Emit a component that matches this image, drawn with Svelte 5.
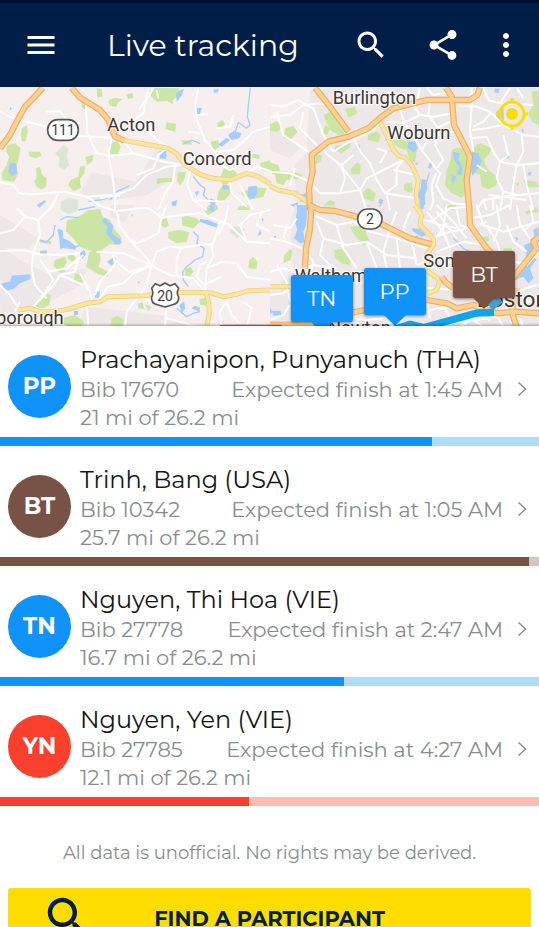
<script>
  const participants = [
    { initials: 'PP', name: 'Prachayanipon, Punyanuch (THA)', bib: 17670, finish: '1:45 AM', miles: 21, color: 'blue' },
    { initials: 'BT', name: 'Trinh, Bang (USA)', bib: 10342, finish: '1:05 AM', miles: 25.7, color: 'brown' },
    { initials: 'TN', name: 'Nguyen, Thi Hoa (VIE)', bib: 27778, finish: '2:47 AM', miles: 16.7, color: 'blue' },
    { initials: 'YN', name: 'Nguyen, Yen (VIE)', bib: 27785, finish: '4:27 AM', miles: 12.1, color: 'red' },
  ]
  const total = 26.2

  // pin tips, in percent of the map
  const pins = [
    { initials: 'TN', x: 59.7, y: 103, color: 'blue' },
    { initials: 'PP', x: 73.2, y: 100, color: 'blue' },
    { initials: 'BT', x: 89.8, y: 93, color: 'brown' },
  ]

  const searchPath = 'M15.5 14h-.79l-.28-.27C15.41 12.59 16 11.11 16 9.5 16 5.91 13.09 3 9.5 3S3 5.91 3 9.5 5.91 16 9.5 16c1.61 0 3.09-.59 4.23-1.57l.27.28v.79l5 4.99L20.49 19l-4.99-5zm-6 0C7.01 14 5 11.99 5 9.5S7.01 5 9.5 5 14 7.01 14 9.5 11.99 14 9.5 14z'

  // the map comes in four tiles, each with its own origin
  const tiles = [
    {
      x: 0, y: -6,
      urban: ['M240 322L275 262 410 290 470 190 560 215 540 270 440 330 300 350z'],
      parks: [
        'M445 18L470 8 535 10 540 30 518 45 520 58 500 48 470 50 455 35z',
        'M290 10L305 12 308 35 292 38z', 'M328 45L345 38 368 42 355 52 348 65 330 62 325 52z', 'M378 28L398 24 400 38 385 42z',
        'M245 45L258 52 256 75 246 68z', 'M66 128L80 122 84 140 76 168 66 170 62 150z', 'M500 112L528 116 526 140 496 132z',
        'M652 115L665 105 675 115 668 130 652 132z', 'M328 175L352 168 362 185 352 212 330 208z',
        'M22 180L45 175 62 190 55 225 48 250 55 265 42 290 8 285 5 265 20 240 28 215 18 200z',
        'M85 200L120 200 125 212 108 220 90 215z', 'M108 250L120 245 126 270 140 280 138 305 125 314 110 305 102 290 110 278z',
        'M255 215L280 210 278 228 262 240z', 'M240 245L256 242 252 268 240 282 243 310 220 318 205 300 212 285 235 275z',
        'M470 280L515 278 518 290 490 292 470 298z', 'M535 262L558 260 552 285 540 302 530 285z', 'M545 165L575 168 575 180 548 178z',
        'M632 170L655 165 658 185 640 200z', 'M672 250L695 250 712 265 690 285 680 300 695 320 675 345 650 350 655 320 668 300 660 280z',
        'M722 325L760 305 800 310 790 335 745 345z', 'M755 205L780 210 778 222 755 218z', 'M780 235L810 225 810 262 785 255z', 'M715 365L745 360 750 375 712 375z',
      ],
      woods: ['M165 205L190 180 205 190 200 215 208 240 192 255 175 245 178 220z', 'M182 350L205 338 235 345 232 375 185 375z'],
      water: [
        'M30 235L48 235 52 262 38 272 25 262z', 'M478 198L500 198 498 222 480 220z', 'M590 70L606 68 598 92 588 90z', 'M528 28L540 15 552 12 545 32 530 50z',
        'M685 150L700 138 725 145 718 160 695 165z', 'M655 178L680 158 690 165 665 185z', 'M745 305L770 302 772 325 760 342 742 335z',
        'M630 340L645 345 648 370 632 362z', 'M515 350L532 345 528 362 516 362z', 'M640 14L655 12 655 22 642 24z', 'M110 360L135 345 138 350 118 368z',
        'M585 320L598 318 590 335z', 'M670 300L690 302 686 314 668 312z', 'M32 64L36 72 28 76z',
      ],
      rivers: ['M751 8L745 60 742 95 750 120 740 130 715 112 708 135 690 160', 'M580 275L600 300 615 310 610 330 640 360', 'M330 345L350 320 372 310 388 302', 'M548 178L575 165 600 175', 'M265 350L300 345 340 335'],
      roads: [
        'M0 80L40 100 140 125', 'M235 152L340 158', 'M140 80L180 78 205 110 200 135', 'M258 55L262 145 290 205 330 212 400 205 440 215 480 228 550 240',
        'M335 160L325 210 335 260 345 330 345 375', 'M0 292L40 300 60 325 100 328 190 320 260 335 300 362', 'M260 335L345 330 400 310 440 270 500 245 560 238',
        'M175 325L150 375', 'M300 340L360 330', 'M445 10L438 45 430 85 400 105', 'M438 45L420 70 460 10', 'M440 135L480 172 515 190', 'M525 240L520 290 495 325 475 375',
        'M595 10L585 60 592 110 615 165 645 200 700 195', 'M592 90L625 88', 'M700 195L740 160 760 140 810 125', 'M690 290L695 325 740 365', 'M570 255L562 300 580 345 620 375',
        'M575 345L670 350', 'M740 265L770 245 810 258', 'M470 15L475 40', 'M565 140L600 145', 'M715 290L760 375', 'M645 200L660 240 690 255 720 240', 'M400 205L380 180 370 165',
        'M500 190L475 210 460 250 410 270', 'M650 130L690 125 700 90',
      ],
      highways: ['M365 165L450 180 505 190 530 205 555 240 600 268 640 280 690 285 740 265 775 275 812 297'],
      motorways: ['M128 8L100 40 75 65 50 110 30 150 0 190', 'M215 8L240 38 300 75 325 105 345 155 372 166'],
    },
    {
      x: 810, y: -6,
      urban: ['M120 15L110 200 75 240 80 375 807 375 807 8 240 8z', 'M0 130L50 145 90 190 60 220 0 195z'],
      parks: [
        'M0 118L20 108 38 125 25 140 0 138z', 'M45 130L70 122 82 140 65 162 42 158z', 'M160 90L182 80 225 148 205 150 180 135z', 'M225 72L255 65 262 85 235 98z', 'M165 120L180 130 172 150 158 145z',
        'M295 150L320 138 332 152 325 172 292 165z', 'M195 182L240 175 242 185 215 205 195 195z', 'M130 205L158 212 150 232 125 242z',
        'M0 232L25 240 30 258 75 262 98 270 90 282 50 285 40 300 20 295 15 270 0 262z', 'M240 255L262 232 272 240 270 268 245 268z',
        'M280 320L295 308 318 325 310 350 280 338z', 'M160 360L180 345 195 350 192 375 165 375z', 'M402 298L425 292 430 315 420 325 402 315z',
        'M355 160L385 165 430 168 442 190 435 232 420 228 410 195 390 190 375 180z',
        'M545 195L560 188 580 190 590 205 592 320 575 338 545 325 525 300 530 255 542 225z',
        'M605 190L630 175 665 190 660 205 640 225 650 250 685 280 680 300 655 312 635 305 630 270 605 260z',
        'M785 20L807 15 807 120 785 110 775 85 790 60z', 'M735 295L748 292 745 305z', 'M760 285L800 290 807 305 770 308z',
      ],
      woods: [],
      water: [
        'M415 170L435 168 444 190 432 202 412 188z', 'M478 235L488 235 482 252 474 248z', 'M548 200L570 205 565 225 578 245 575 270 560 268 568 245 552 225z', 'M545 270L558 275 550 300 545 290z',
        'M605 200L625 205 635 228 625 250 608 272 604 260z', 'M455 282L470 285 472 310 465 330 466 375 445 375 450 345 440 330 452 310z', 'M675 10L688 12 685 25 672 22z',
        'M680 80L700 65 702 110 678 102z', 'M85 330L108 325 112 350 92 350z', 'M328 340L340 345 335 360 326 355z', 'M265 175L270 182 266 190z', 'M703 212L718 210 716 220 703 220z', 'M775 262L785 260 782 272 772 270z', 'M755 130L762 135 758 150z', 'M60 360L85 352 80 368z', 'M435 235L446 232 440 242z',
      ],
      rivers: ['M470 290L478 262', 'M448 330L440 352'],
      roads: [
        'M0 60L40 65 85 45 130 70 160 150 190 200', 'M100 80L90 130 140 180 210 240 270 315', 'M0 95L60 90 100 60 150 55 185 60', 'M115 200L40 150 20 80', 'M0 260L60 265 120 290 150 325 210 325 270 315 290 280 340 255 400 225',
        'M270 315L290 375', 'M190 200L230 175 270 155 310 135 330 110', 'M260 130L255 170 275 205 300 235 320 285 345 325 440 340', 'M210 325L225 280 215 240 250 210', 'M345 325L380 300 380 250 400 225',
        'M390 65L400 110 430 150 455 195 490 240 510 265 498 300 520 340 550 355 600 360', 'M455 195L480 155 550 140', 'M430 60L450 90 490 95 550 85', 'M480 50L475 90 505 130 495 180 520 225 500 250', 'M350 110L400 115 450 90',
        'M560 60L620 65 660 80 700 120 760 150 807 155', 'M605 8L605 60 600 135 610 200', 'M605 135L650 130 700 120', 'M600 160L650 155 670 200 690 230 740 240 807 235', 'M640 8L655 45 690 55 790 60', 'M690 55L720 8', 'M665 80L640 110 610 125',
        'M690 230L680 280 700 320 740 330 807 325', 'M740 240L760 200 755 150', 'M740 240L730 300 720 375', 'M620 375L640 345 700 335 740 330', 'M700 320L690 375', 'M670 340L670 375', 'M760 240L770 300 790 375', 'M650 260L620 240',
        'M480 375L490 350 485 300 498 265', 'M320 190L350 200 330 235', 'M440 50L450 8', 'M470 8L490 30 540 20', 'M300 8L320 30', 'M655 330L770 345', 'M640 345L650 375', 'M700 150L715 210 690 230', 'M60 300L75 250', 'M370 255L440 270', 'M350 330L360 375', 'M740 8L760 40', 'M500 130L540 110',
      ],
      highways: ['M330 110L350 150 370 195 385 212 405 218 425 240 445 285 438 330 445 375', 'M0 303L25 315 75 325 105 345 140 372'],
      motorways: ['M135 8L180 65 235 140', 'M528 8L545 35 552 120 575 165 600 215 590 285 598 375', 'M548 45L600 45 622 30 630 8', 'M548 45L470 45 370 70 335 95 295 130 235 155 175 170 125 210 128 260 117 310 120 375'],
    },
    {
      x: 0, y: 354,
      urban: ['M0 120L60 165 140 205 260 190 245 240 130 300 0 335z', 'M260 305L480 330 600 362 230 362z', 'M330 0L400 0 375 50 330 35z', 'M0 30L50 60 115 100 90 130 0 130z'],
      parks: [
        'M200 48L245 30 265 15 300 12 308 35 330 45 345 75 365 100 360 120 330 118 300 138 265 135 240 125 220 100 198 80z',
        'M268 140L300 142 302 165 295 185 325 200 322 215 295 208 258 185z', 'M202 148L220 145 228 160 218 172 204 162z', 'M165 165L195 155 200 170 190 190 198 200 180 203 160 182z',
        'M225 205L245 210 256 228 240 236 222 225z', 'M115 290L140 265 152 270 148 300 130 310 108 305z', 'M185 340L225 330 252 350 245 366 180 366z', 'M335 340L352 332 372 345 365 366 330 366z',
        'M485 42L498 38 507 62 492 68 482 58z', 'M545 38L560 32 590 40 600 50 580 70 548 62z', 'M505 80L540 75 568 82 560 110 530 115 505 100z', 'M555 192L572 185 580 200 570 215 556 212z',
        'M748 165L760 155 772 170 770 192 745 190z', 'M598 282L620 278 622 302 600 300z', 'M415 295L428 292 432 312 414 310z', 'M435 298L455 305 445 318z', 'M615 20L625 0 650 0 655 12 625 30z', 'M118 105L155 108 152 118 118 112z', 'M270 135L298 132 300 148 280 146z',
      ],
      woods: ['M182 0L235 0 232 18 205 28 182 15z', 'M688 78L705 62 735 72 730 85 712 100z'],
      water: [
        'M5 235L30 230 35 212 90 208 92 222 60 235 40 252 12 258z', 'M172 72L188 75 190 100 208 108 230 125 225 135 200 125 180 132 178 100z', 'M305 45L318 38 325 52 340 60 335 85 362 105 366 115 345 118 330 98 318 85 322 65z',
        'M120 138L140 136 142 150 122 150z', 'M240 145L252 135 258 148 246 162z', 'M288 262L300 258 298 278 284 278z', 'M600 42L625 45 655 58 650 68 620 58 598 50z', 'M538 300L552 290 556 310 545 325z',
        'M575 310L585 302 600 308 598 320z', 'M630 0L645 5 640 22 628 15z', 'M780 72L784 88 774 92z', 'M785 40L792 42 786 52z', 'M320 170L345 155 348 168 335 182z', 'M394 30L400 28 398 36z', 'M412 232L418 228 418 236z', 'M222 318L235 318 234 330 222 330z',
      ],
      rivers: ['M165 60L160 90 140 112 120 105', 'M180 45L200 35 235 38', 'M190 128L215 130 238 122', 'M580 80L595 95 590 115 612 130 608 155 585 165 560 185 548 200 550 225 565 245', 'M530 310L560 335 580 325 600 320', 'M235 15L285 5'],
      roads: [
        'M0 85L40 75 75 35 115 45 120 90 100 145 95 190', 'M75 35L50 10', 'M0 138L70 135 120 148 180 150 240 145', 'M115 45L155 5', 'M0 240L30 270 55 310', 'M95 190L105 240 140 280', 'M145 200L160 225 130 270 105 300', 'M145 200L200 190 250 150',
        'M235 160L225 200 180 210 165 235 120 285', 'M145 200L120 165', 'M290 0L350 18 360 65 390 105 440 160 455 182', 'M350 18L430 8 450 12 485 38', 'M290 140L370 145 440 175 510 210 580 220 615 260', 'M455 182L440 240 415 275 380 320 375 365',
        'M455 182L470 140 510 125 545 128 530 160 530 210', 'M455 182L400 205 370 235 325 245 285 300', 'M485 38L545 30 600 25 660 48 685 58 740 110 810 115', 'M485 38L475 85 410 115 395 105', 'M660 48L650 85 635 125 640 155 620 190 615 260', 'M685 0L675 50 655 90',
        'M545 128L600 120 640 118', 'M620 190L665 170 710 175 740 215 810 225', 'M240 205L270 260 280 300', 'M180 210L250 240', 'M345 165L380 195 390 205', 'M340 150L345 180 300 230 285 270', 'M415 275L500 300 495 365', 'M500 340L540 350 590 365',
        'M740 110L720 60 750 30 810 15', 'M680 290L660 320 665 365', 'M680 290L695 330 720 355', 'M730 290L755 310 740 365', 'M610 240L665 215', 'M785 20L770 60 810 80', 'M390 200L460 180', 'M260 290L265 365', 'M485 38L500 0', 'M100 300L140 340 200 365', 'M45 320L60 290', 'M620 250L590 215 600 180 620 170',
      ],
      highways: ['M55 315L92 310 120 320 165 320 205 312 260 295 300 290 325 275 440 272 470 262 630 263 670 275 710 268 740 258 810 255', 'M618 263L626 290 628 325 620 366'],
      motorways: [],
    },
    {
      x: 810, y: 354,
      urban: ['M75 0L60 60 70 200 0 260 0 366 807 366 807 0z'],
      parks: [
        'M240 65L262 62 285 60 290 90 298 105 280 122 262 100 250 85z', 'M192 135L215 132 242 160 240 182 215 175 195 160z', 'M42 152L60 132 68 140 62 165 40 175z', 'M520 0L560 0 552 15 530 10z', 'M278 0L298 0 305 5z',
        'M628 98L655 94 658 108 635 110z', 'M765 20L800 5 807 20 770 28z', 'M700 130L725 128 728 140 700 142z',
      ],
      woods: ['M160 0L195 0 200 8 165 10z'],
      water: [
        'M82 15L80 0 110 0 112 20 108 60 100 80 105 110 90 115 72 100 82 75 75 50z', 'M445 0L462 0 460 12 450 15z', 'M325 0L335 0 330 5z', 'M425 70L450 72 470 90 455 95 430 80z', 'M432 95L445 92 440 110z',
        'M740 190L760 170 785 155 800 162 780 190 790 220 775 235 760 215 735 225z', 'M790 75L805 65 807 90 792 92z', 'M8 318L32 318 35 330 10 332z', 'M0 310L10 322 0 326z', 'M735 95L745 100 740 110z', 'M762 120L790 110 790 150 770 155z', 'M10 95L18 92 18 100z', 'M655 290L680 280 690 300 660 310z',
      ],
      rivers: ['M725 235L700 250 670 300', 'M550 100L580 130 620 150'],
      roads: [
        'M130 30L200 60 250 50 300 80 380 100 470 130', 'M10 60L60 70 80 40', 'M0 100L50 110 95 130', 'M0 200L40 190 80 200 130 180 200 190', 'M140 50L160 100 150 150 190 190', 'M160 100L230 120 290 110 350 150 440 160', 'M200 60L220 130 260 190', 'M290 110L320 190', 'M380 20L360 70 340 140 350 190', 'M380 100L390 190',
        'M420 20L400 70 430 130 440 180', 'M450 40L510 60 560 70', 'M470 20L520 80 540 130', 'M500 0L550 50 590 100', 'M480 50L540 10 600 5', 'M480 100L540 80 600 70 650 50', 'M500 140L580 110 640 120', 'M620 0L640 60 700 80 807 50', 'M600 40L660 30 720 0', 'M650 60L680 110 690 140', 'M680 0L690 60 670 110', 'M710 60L730 110 770 140', 'M740 0L750 60 780 100', 'M780 0L790 50 760 80', 'M500 20L560 100', 'M530 0L520 70 490 110',
        'M0 270L40 265 70 240', 'M0 345L40 330 60 300', 'M20 180L50 230 60 290', 'M250 340L290 345 340 340', 'M470 190L530 180 550 160', 'M470 250L560 255', 'M470 280L480 340', 'M500 280L530 320 540 340', 'M560 340L590 360', 'M610 345L640 366', 'M680 330L700 366', 'M750 340L760 366', 'M700 290L720 330', 'M520 366L580 335 620 345 680 335', 'M740 260L800 240', 'M760 300L790 280 807 300', 'M735 170L770 180 807 140', 'M440 180L470 170 480 140', 'M560 15L570 60 640 90', 'M100 130L130 170 120 210', 'M40 100L50 60', 'M470 320L500 310 560 310', 'M570 366L620 330 660 345', 'M720 345L740 366',
      ],
      highways: ['M435 0L455 30 450 60 490 100 490 120 470 150 475 200 510 225 500 255 470 265', 'M0 245L60 245'],
      motorways: ['M125 0L120 70 108 130 105 190', 'M118 0L150 15 195 18 270 38', 'M330 55L370 75 420 100 485 118', 'M597 0L600 60 650 130 690 170', 'M807 95L790 110 800 130 780 155 740 205 730 220', 'M515 215L525 230 550 250', 'M470 285L530 295 560 310 610 300 680 325 735 320 807 325', 'M740 250L725 320 740 366', 'M250 322L285 315', 'M0 360L60 360 170 352'],
    },
  ]
</script>

<svelte:head>
  <title>Live tracking</title>
</svelte:head>

<div class="app">
  <header class="topbar">
    <button aria-label="Menu">
      <svg width="36" height="36" viewBox="0 0 24 24" fill="currentColor"><path d="M3 18h18v-2H3v2zm0-5h18v-2H3v2zm0-7v2h18V6H3z"/></svg>
    </button>
    <h1>Live tracking</h1>
    <button aria-label="Search">
      <svg width="36" height="36" viewBox="0 0 24 24" fill="currentColor"><path d={searchPath}/></svg>
    </button>
    <button aria-label="Share">
      <svg width="36" height="36" viewBox="0 0 24 24" fill="currentColor"><path d="M18 16.08c-.76 0-1.44.3-1.96.77L8.91 12.7c.05-.23.09-.46.09-.7s-.04-.47-.09-.7l7.05-4.11c.54.5 1.25.81 2.04.81 1.66 0 3-1.34 3-3s-1.34-3-3-3-3 1.34-3 3c0 .24.04.47.09.7L8.04 9.81C7.5 9.31 6.79 9 6 9c-1.66 0-3 1.34-3 3s1.34 3 3 3c.79 0 1.5-.31 2.04-.81l7.12 4.16c-.05.21-.08.43-.08.65 0 1.61 1.31 2.92 2.92 2.92s2.92-1.31 2.92-2.92-1.31-2.92-2.92-2.92z"/></svg>
    </button>
    <button aria-label="More options">
      <svg width="18" height="36" viewBox="6 0 12 24" fill="currentColor"><path d="M12 8c1.1 0 2-.9 2-2s-.9-2-2-2-2 .9-2 2 .9 2 2 2zm0 2c-1.1 0-2 .9-2 2s.9 2 2 2 2-.9 2-2-.9-2-2-2zm0 6c-1.1 0-2 .9-2 2s.9 2 2 2 2-.9 2-2-.9-2-2-2z"/></svg>
    </button>
  </header>

  <section class="map" aria-label="Map">
    <svg class="canvas" viewBox="0 0 1617 717" preserveAspectRatio="xMidYMid slice">
      {#each tiles as t}
        <g transform="translate({t.x} {t.y})">
          {#each t.urban as d}<path class="urban" {d}/>{/each}
          {#each t.parks as d}<path class="park" {d}/>{/each}
          {#each t.woods as d}<path class="wood" {d}/>{/each}
          {#each t.water as d}<path class="water" {d}/>{/each}
          {#each t.rivers as d}<path class="river" {d}/>{/each}
        </g>
      {/each}
      {#each tiles as t}
        <g transform="translate({t.x} {t.y})">
          {#each t.roads as d}<path class="road" {d}/>{/each}
        </g>
      {/each}
      {#each tiles as t}
        <g transform="translate({t.x} {t.y})">
          {#each t.highways as d}<path class="highway-edge" {d}/>{/each}
          {#each t.highways as d}<path class="highway" {d}/>{/each}
          {#each t.motorways as d}<path class="motorway-edge" {d}/>{/each}
          {#each t.motorways as d}<path class="motorway" {d}/>{/each}
        </g>
      {/each}

      <g class="shield">
        <rect x="143" y="98" width="92" height="62" rx="30"/>
        <text x="189" y="145">111</text>
        <rect x="1073" y="366" width="73" height="60" rx="29"/>
        <text x="1110" y="412">2</text>
        <path d="M466 590L480 596 495 588 510 596 525 590 536 604Q528 618 536 630Q538 650 515 654L495 660 475 654Q452 650 455 630Q462 618 455 604z"/>
        <text x="495" y="642">20</text>
      </g>

      <g class="places">
        <text x="322" y="131">Acton</text>
        <text x="548" y="233">Concord</text>
        <text x="998" y="50">Burlington</text>
        <text x="1162" y="156">Woburn</text>
        <text x="-12" y="711">borough</text>
        <text x="884" y="584">Waltham</text>
        <text x="1270" y="541">Somerville</text>
        <text x="984" y="741">Newton</text>
        <text class="city" x="1430" y="660">Boston</text>
      </g>

      <path class="route-red" d="M660 717H845"/>
      <path class="route" d="M1000 728L1180 728 1230 712 1270 722 1430 678 1482 676"/>
      <path class="route-end" d="M1470 660L1500 636"/>
    </svg>

    <button class="locate" aria-label="My location">
      <svg width="32" height="32" viewBox="0 0 32 32" fill="none" stroke="currentColor" stroke-width="3">
        <circle cx="16" cy="16" r="12"/>
        <path d="M16 0v5M16 27v5M0 16h5M27 16h5"/>
        <circle cx="16" cy="16" r="6" fill="currentColor" stroke="none"/>
      </svg>
    </button>

    {#each pins as pin}
      <button class="pin {pin.color}" style="left: {pin.x}%; top: {pin.y}%">{pin.initials}</button>
    {/each}
  </section>

  <main>
    <ul>
      {#each participants as p}
        <li class={p.color}>
          <a href="#{p.bib}">
            <span class="avatar">{p.initials}</span>
            <span class="info">
              <span class="name">{p.name}</span>
              <span class="meta">
                <span>Bib {p.bib}</span>
                <span>Expected finish at {p.finish}</span>
              </span>
              <span class="distance">{p.miles} mi of {total} mi</span>
            </span>
            <svg class="chevron" width="10" height="16" viewBox="0 0 10 16" fill="none" stroke="currentColor" stroke-width="1.5"><path d="M1.500 1.500L8.500 8 1.500 14.500"/></svg>
          </a>
          <div class="track" role="progressbar" aria-label={p.name} aria-valuemin="0" aria-valuemax={total} aria-valuenow={p.miles}>
            <div class="done" style="width: {p.miles / total * 100}%"></div>
          </div>
        </li>
      {/each}
    </ul>

    <p class="note">All data is unofficial. No rights may be derived.</p>

    <button class="find">
      <svg width="54" height="54" viewBox="0 0 24 24" fill="currentColor"><path d={searchPath}/></svg>
      <span>FIND A PARTICIPANT</span>
    </button>
  </main>
</div>

<style>
  :global(body) {
    margin: 0;
    background: #fff;
  }

  .app {
    height: 100vh;
    display: flex;
    flex-direction: column;
    overflow: hidden;
    font-family: Montserrat, Inter, 'Open Sans', sans-serif;
  }

  button {
    padding: 0;
    border: 0;
    background: none;
    color: inherit;
    font: inherit;
    cursor: pointer;
  }

  svg { display: block; }

  .blue { --color: #1093f8; --light: #afdbff; }
  .brown { --color: #795246; --light: #d3c7c2; }
  .red { --color: #f9402d; --light: #ffbcb5; }

  .topbar {
    box-sizing: border-box;
    flex: none;
    display: flex;
    align-items: center;
    gap: 36px;
    height: 87px;
    padding: 0 24px 0 23px;
    border-top: 3px solid #001230;
    background: #001e47;
    color: #fff;
  }

  h1 {
    flex: 1;
    margin: 0 0 0 12px;
    font-size: 30px;
    font-weight: 400;
    white-space: nowrap;
  }

  .map {
    position: relative;
    flex: none;
    height: 239px;
    overflow: hidden;
    background: #f7eeee;
  }

  .map::after {
    content: '';
    position: absolute;
    inset: auto 0 0;
    height: 3px;
    background: linear-gradient(rgba(0, 0, 0, 0), rgba(0, 0, 0, 0.25));
  }

  .canvas {
    width: 100%;
    height: 100%;
  }

  .canvas path { stroke-linejoin: round; }
  .urban { fill: #eee7e8; }
  .park { fill: #cbe6a3; }
  .wood { fill: #dce6d6; }
  .water { fill: #a3ccff; }
  .river { fill: none; stroke: #a3ccff; stroke-width: 4; }
  .road { fill: none; stroke: #fff; stroke-width: 6; }
  .highway-edge { fill: none; stroke: #edcf87; stroke-width: 15; }
  .highway { fill: none; stroke: #fde59c; stroke-width: 10; }
  .motorway-edge { fill: none; stroke: #efae66; stroke-width: 19; }
  .motorway { fill: none; stroke: #ffd191; stroke-width: 12; }
  .route { fill: none; stroke: #10a4ee; stroke-width: 22; }
  .route-end { fill: none; stroke: #469fca; stroke-width: 26; }
  .route-red { fill: none; stroke: #e2503f; stroke-width: 8; }

  .places text {
    font: 55px Roboto, sans-serif;
    fill: #3c3731;
    stroke: #fff;
    stroke-width: 7;
    stroke-opacity: 0.8;
    paint-order: stroke;
  }

  .places .city { font-size: 68px; }

  .shield rect,
  .shield path {
    fill: #fff;
    stroke: #55565a;
    stroke-width: 5;
  }

  .shield text {
    font: 42px Roboto, sans-serif;
    fill: #3b3b3b;
    text-anchor: middle;
  }

  .locate {
    position: absolute;
    top: 11px;
    right: 11px;
    color: #ffdd00;
  }

  .pin {
    position: absolute;
    width: 62px;
    height: 47px;
    border-radius: 3px;
    transform: translate(-50%, calc(-100% - 11px));
    background: var(--color);
    box-shadow: 0 1px 3px rgba(0, 0, 0, 0.5);
    color: #fff;
    font-size: 21px;
    font-weight: 400;
  }

  .pin::after {
    content: '';
    position: absolute;
    top: 100%;
    left: 50%;
    transform: translateX(-50%);
    border: 11px solid transparent;
    border-top-color: var(--color);
    border-bottom: 0;
  }

  main {
    flex: 1;
    min-height: 0;
    overflow-y: auto;
    scrollbar-width: none;
    background: #fff;
  }

  ul {
    margin: 0;
    padding: 0;
    list-style: none;
  }

  li a {
    display: flex;
    align-items: flex-start;
    padding: 19px 12px 5px 8px;
    color: #898d8d;
    text-decoration: none;
  }

  .avatar {
    flex: none;
    width: 63px;
    margin: 10px 9px 0 0;
    border-radius: 50%;
    background: var(--color);
    color: #fff;
    font-size: 23px;
    font-weight: 700;
    line-height: 63px;
    text-align: center;
  }

  .info {
    flex: 1;
    min-width: 0;
    display: flex;
    flex-direction: column;
    font-size: 21px;
    line-height: 28px;
  }

  .name {
    margin-bottom: 2px;
    color: #161616;
    font-size: 24px;
    line-height: 29px;
    white-space: nowrap;
  }

  .meta {
    display: flex;
    justify-content: space-between;
    white-space: nowrap;
  }

  .chevron {
    flex: none;
    margin: 36px 0 0 14px;
  }

  .track {
    height: 9px;
    background: var(--light);
  }

  .done {
    height: 100%;
    background: var(--color);
  }

  .note {
    margin: 34px 8px 22px;
    color: #898d8d;
    font-size: 18px;
    line-height: 26px;
    text-align: center;
  }

  .find {
    display: grid;
    grid-template-columns: 1fr auto 1fr;
    align-items: center;
    width: calc(100% - 16px);
    height: 60px;
    margin: 0 8px 16px;
    padding: 0 33px;
    border-radius: 3px;
    background: #ffdd00;
    color: #001e47;
    font-size: 21px;
    font-weight: 700;
  }
</style>
